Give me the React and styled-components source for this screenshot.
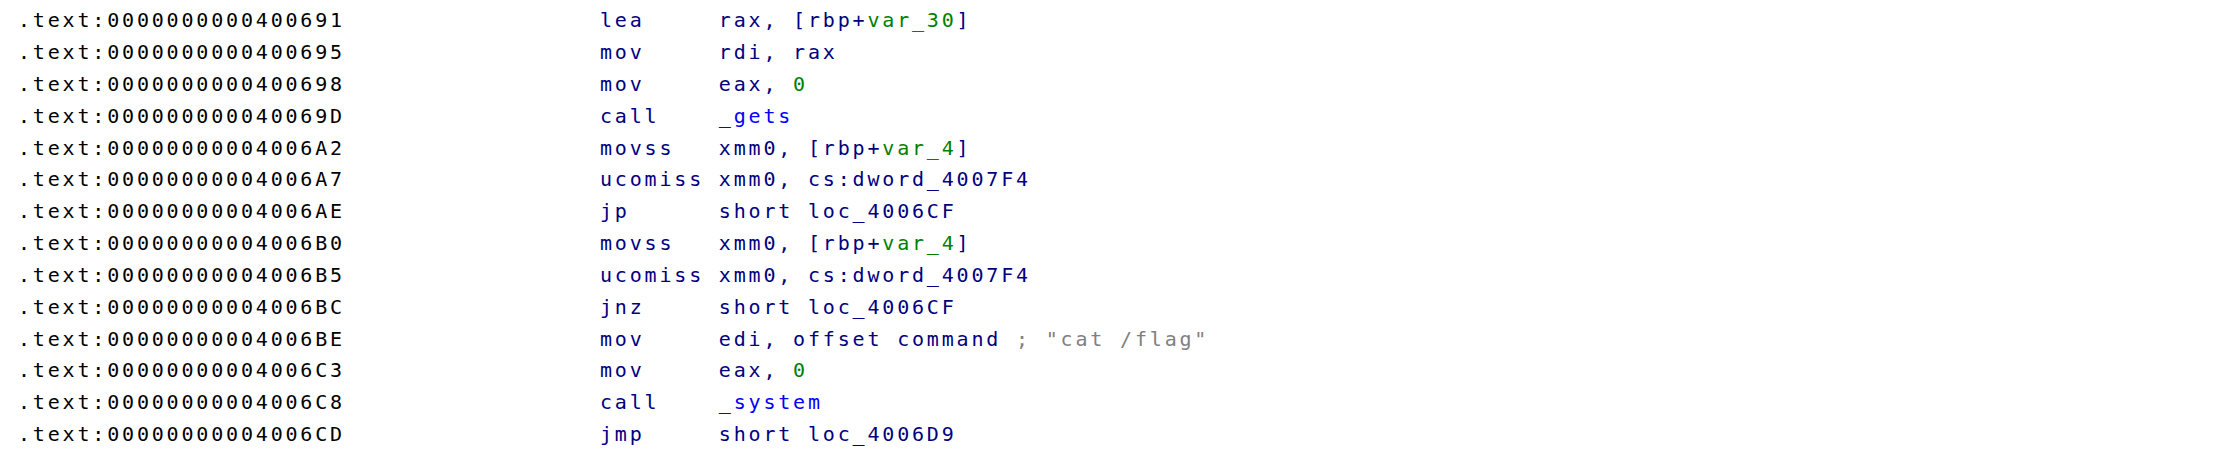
import React from 'react';
import styled, { createGlobalStyle } from 'styled-components';

const GlobalStyle = createGlobalStyle`
    html, body {
        margin: 0;
        padding: 0;
        background: #ffffff;
    }
`;

const colors = {
    plain: '#000080',
    num: '#008000',
    func: '#0000ff',
    comment: '#808080',
};

const rows = [
    { addr: '000000000040068C', mn: 'call', ops: [['_setvbuf', 'func']] },
    { addr: '0000000000400691', mn: 'lea', ops: [['rax, [rbp+'], ['var_30', 'num'], [']']] },
    { addr: '0000000000400695', mn: 'mov', ops: [['rdi, rax']] },
    { addr: '0000000000400698', mn: 'mov', ops: [['eax, '], ['0', 'num']] },
    { addr: '000000000040069D', mn: 'call', ops: [['_gets', 'func']] },
    { addr: '00000000004006A2', mn: 'movss', ops: [['xmm0, [rbp+'], ['var_4', 'num'], [']']] },
    { addr: '00000000004006A7', mn: 'ucomiss', ops: [['xmm0, cs:dword_4007F4']] },
    { addr: '00000000004006AE', mn: 'jp', ops: [['short loc_4006CF']] },
    { addr: '00000000004006B0', mn: 'movss', ops: [['xmm0, [rbp+'], ['var_4', 'num'], [']']] },
    { addr: '00000000004006B5', mn: 'ucomiss', ops: [['xmm0, cs:dword_4007F4']] },
    { addr: '00000000004006BC', mn: 'jnz', ops: [['short loc_4006CF']] },
    { addr: '00000000004006BE', mn: 'mov', ops: [['edi, offset command '], ['; "cat /flag"', 'comment']] },
    { addr: '00000000004006C3', mn: 'mov', ops: [['eax, '], ['0', 'num']] },
    { addr: '00000000004006C8', mn: 'call', ops: [['_system', 'func']] },
    { addr: '00000000004006CD', mn: 'jmp', ops: [['short loc_4006D9']] },
];

export default function App() {
    return (
        <>
            <GlobalStyle />
            <Viewport>
                <Listing>
                    {rows.map((row) => (
                        <Line key={row.addr}>
                            <Address>.text:{row.addr}</Address>
                            <Mnemonic>{row.mn}</Mnemonic>
                            <Operands>
                                {row.ops.map(([text, kind], i) => (
                                    <Token key={i} $kind={kind || 'plain'}>{text}</Token>
                                ))}
                            </Operands>
                        </Line>
                    ))}
                </Listing>
            </Viewport>
        </>
    );
}

const Viewport = styled.div`
    height: 451px;
    overflow: hidden;
    background: #ffffff;
`;

// scrolled listing: the first line sits mostly above the window
const Listing = styled.div`
    margin-top: -26.7px;
    padding-left: 18px;
    font-family: "DejaVu Sans Mono", "Liberation Mono", monospace;
    font-size: 20px;
    letter-spacing: 2.82px;
    line-height: 31.85px;
    white-space: pre;
`;

const Line = styled.div`
    display: grid;
    grid-template-columns: 582px 118.8px 1fr;
    height: 31.85px;
`;

const Address = styled.span`
    color: #000000;
`;

const Mnemonic = styled.span`
    color: #000080;
`;

const Operands = styled.span`
    color: #000080;
`;

const Token = styled.span`
    color: ${(p) => colors[p.$kind]};
`;
